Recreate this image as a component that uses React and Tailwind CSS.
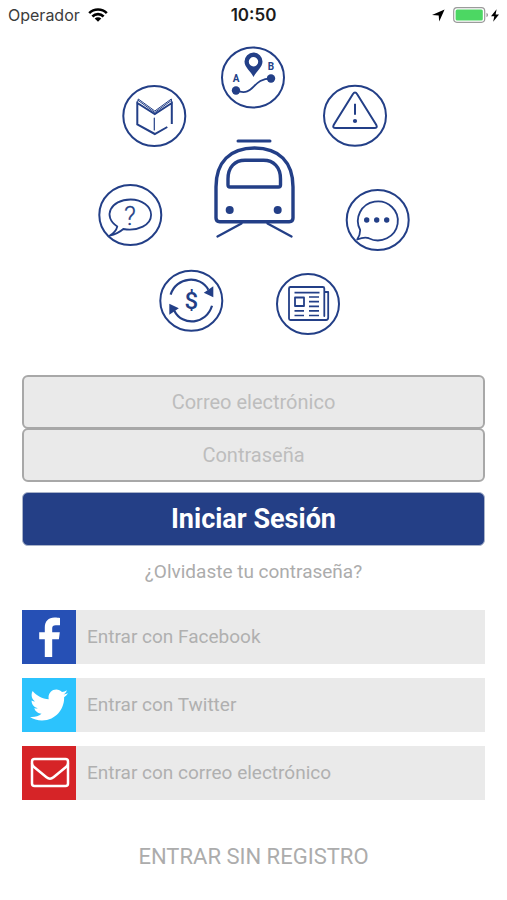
import { FaTwitter } from "react-icons/fa";

function StatusBar() {
  return (
    <header className="grid h-[30px] grid-cols-3 items-center px-2 font-['Inter','Liberation_Sans',sans-serif] text-base text-[#1c1c1c]">
      <div className="flex items-center gap-2">
        <span className="text-[#3c3c3c]">Operador</span>
        <svg viewBox="0 0 20 14" className="h-[14px] w-5" aria-hidden="true">
          <g fill="none" stroke="#000" strokeWidth="2.6">
            <path d="M1.2 5.2a12.4 12.4 0 0 1 17.6 0" />
            <path d="M4.4 8.5a7.9 7.9 0 0 1 11.2 0" />
          </g>
          <path d="M10 13.8 6.7 10.5a4.7 4.7 0 0 1 6.6 0z" />
        </svg>
      </div>
      <time className="text-center text-[17px] leading-6 font-semibold">10:50</time>
      <div className="flex items-center justify-end gap-2">
        <svg viewBox="0 0 13 13" className="size-[13px]" aria-hidden="true">
          <path d="M12.6.4 7.2 12.6 6.7 6.5 0 6z" />
        </svg>
        <div className="flex items-center gap-0.5">
          <svg viewBox="0 0 36 16" className="h-4 w-9" aria-hidden="true">
            <rect x="0.7" y="0.7" width="31" height="14.6" rx="3.2" fill="#fff" stroke="#9b9b9b" strokeWidth="1.2" />
            <rect x="2.6" y="2.6" width="27.2" height="10.8" rx="1.5" fill="#4cd763" />
            <path d="M33.5 5.8c2 .8 2 3.6 0 4.4z" fill="#8d8d8d" />
          </svg>
          <svg viewBox="0 0 8 13" className="h-[13px] w-2" aria-hidden="true">
            <path d="M5.6.2 0 7.3h3.3L2.2 12.8 8 5.5H4.6z" />
          </svg>
        </div>
      </div>
    </header>
  );
}

function Badge({ x, y, children }) {
  return (
    <g transform={`translate(${x} ${y})`}>
      <ellipse rx="31" ry="30" strokeWidth="2" />
      {children}
    </g>
  );
}

function Illustration() {
  return (
    <svg
      viewBox="0 0 321 300"
      className="mx-auto mt-[10px] w-[321px] max-w-full font-['Roboto',sans-serif]"
      fill="none"
      stroke="#233f87"
      strokeWidth="2"
      strokeLinecap="round"
      strokeLinejoin="round"
      role="img"
      aria-label="Servicios del tren"
    >
      {/* Train */}
      <path d="M145 101h32" strokeWidth="3" />
      <path
        d="M123 147c0-25 14-39 38.500-39s38.500 14 38.500 39v31q0 3.700-3.700 3.700h-69.600q-3.700 0-3.700-3.700z"
        strokeWidth="3.400"
      />
      <path d="M135 139c0-12 7-18.700 17-18.700h18.500c10 0 17 6.700 17 18.700v6q0 2-2 2h-48.500q-2 0-2-2z" strokeWidth="3.400" />
      <g fill="#233f87" stroke="none">
        <circle cx="136.700" cy="170" r="4" />
        <circle cx="184.700" cy="170" r="4" />
      </g>
      <path d="m124.500 196.500 24-13M198.500 196.500l-24-13" strokeWidth="2.300" />

      {/* Route */}
      <Badge x={160} y={37.5}>
        <path d="M-17 13C2 20-2 1 18 1" strokeWidth="1.800" />
        <g fill="#233f87" stroke="none">
          <circle cx="-17" cy="13" r="4.200" />
          <circle cx="18" cy="1" r="4.200" />
          <path
            fillRule="evenodd"
            d="M.5-.5C-2-6-8.500-10-8.500-16a9 9 0 0 1 18 0C9.500-10 3-6 .5-.5zM.5-20.500a4.700 4.700 0 1 0 0 9.400 4.700 4.700 0 0 0 0-9.400z"
          />
          <text x="-17" y="4.500" fontSize="10" fontWeight="700" textAnchor="middle">A</text>
          <text x="18" y="-8" fontSize="10" fontWeight="700" textAnchor="middle">B</text>
        </g>
      </Badge>

      {/* Book */}
      <Badge x={61.3} y={76}>
        <path d="M13 11 .5 18-17 8.500V-13L.5-2l17-11V8" strokeLinecap="butt" strokeLinejoin="miter" />
        <path d="M0 2v12" strokeWidth="1.200" />
        <path d="M-17-13l1-4L.5-5 17-17l.5 4M-16-15.500.5-3.500 17-15.500" strokeWidth="1" />
      </Badge>

      {/* Alert */}
      <Badge x={262} y={75.700}>
        <path d="M-2.200-21.500q2.200-3.400 4.400 0l19 30.500q1.800 3.300-2 3.300h-38.400q-3.800 0-2-3.300z" />
        <path d="M0-12V-1" strokeLinecap="butt" />
        <circle cy="5.300" r="2.100" fill="#233f87" stroke="none" />
      </Badge>

      {/* Help */}
      <Badge x={37.300} y={175}>
        <path d="M-13 11.500C-28 2-20-15.500.3-15.500c11.500 0 20.500 7 20.500 15.300C20.800 10 8 16.500-7 14c-4 3.500-8 5.500-13.500 6.500 4-2.300 6.500-5 7.500-9z" strokeWidth="1.800" />
        <text x="-0.500" y="9.500" fontSize="26" fontWeight="300" textAnchor="middle" fill="#233f87" stroke="#233f87" strokeWidth="0.300">?</text>
      </Badge>

      {/* Chat */}
      <Badge x={284.700} y={180}>
        <path d="M-17.500 10A20 19.500 0 1 1-9 18.200c-3.500-1.500-7-.5-11.500 1.300C-18.500 16.500-17.500 13-17.500 10z" strokeWidth="1.800" />
        <g fill="#233f87" stroke="none">
          <circle cx="-11" r="2.700" />
          <circle cx="-1" r="2.700" />
          <circle cx="9" r="2.700" />
        </g>
      </Badge>

      {/* Fares */}
      <Badge x={98.300} y={260.700}>
        <path d="M-20.700-6C-15-24 9-26 17-11" strokeLinecap="butt" strokeWidth="2.200" />
        <path d="M20.700 5C15 24-9 26-17 10" strokeLinecap="butt" strokeWidth="2.200" />
        <g fill="#233f87" stroke="none">
          <path d="M22-14.500V-3.500L12.500-8z" />
          <path d="M-22 14V3l9.500 4.500z" />
          <text x="0" y="8.500" fontSize="24" fontWeight="500" textAnchor="middle">$</text>
        </g>
      </Badge>

      {/* News */}
      <Badge x={215} y={264}>
        <path d="M16.300 12V-15.500q0-1.500-1.500-1.500h-32.300q-1.500 0-1.500 1.500v30q0 1.500 1.500 1.500h35.500q2.200 0 2.200-2.500V-12H16.300" strokeWidth="1.800" />
        <path d="M-13.500-11.300h25M1-7h10M1-2.300h10M1 2.300h10M1 6.900h10M1 11.500h10M-13.500 6.900h9.500M-13.500 11.500h9.500" strokeWidth="1.700" strokeLinecap="butt" />
        <path d="M-13-6.500h9v8.500h-9z" strokeWidth="1.800" />
      </Badge>
    </svg>
  );
}

function FacebookMark() {
  return (
    <svg viewBox="0 0 54 54" className="size-full" fill="#fff" aria-hidden="true">
      <path d="M38 8v7.300h-4.200c-2.600 0-3.600 1-3.600 3.300v3.600h7.600l-.9 7h-6.700V47h-7.400V29.200H17.200v-7h5.600v-4.900c0-6 3.600-9.800 9.700-9.800 2.300 0 4.300.2 5.500.5z" />
    </svg>
  );
}

function MailMark() {
  return (
    <svg viewBox="0 0 54 54" className="size-full" fill="none" stroke="#fff" strokeWidth="2.500" strokeLinejoin="round" aria-hidden="true">
      <rect x="10" y="13" width="36" height="27" rx="2.500" />
      <path d="M10 17.500c0 1.500.8 2.500 2 3.500l12.500 10.300c2.400 2 4.600 2 7 0L44 21c1.200-1 2-2 2-3.500" />
    </svg>
  );
}

const providers = [
  { label: "Entrar con Facebook", tile: "bg-[#2650b5]", icon: <FacebookMark /> },
  { label: "Entrar con Twitter", tile: "bg-[#2cc3fd]", icon: <FaTwitter className="size-[38px] text-white" aria-hidden="true" /> },
  { label: "Entrar con correo electrónico", tile: "bg-[#d62427]", icon: <MailMark /> },
];

const field =
  "h-[54px] w-full rounded-md border-2 border-[#a8a8a8] bg-[#eaeaea] text-center text-xl text-[#555] outline-none placeholder:text-[#bdbdbd]";

export default function App() {
  return (
    <div className="min-h-screen bg-white font-['Roboto',sans-serif]">
      <StatusBar />
      <main className="px-[22px] pb-7">
        <Illustration />
        <form className="mt-[35px] flex flex-col" onSubmit={(e) => e.preventDefault()}>
          <input type="email" aria-label="Correo electrónico" placeholder="Correo electrónico" className={field} />
          <input type="password" aria-label="Contraseña" placeholder="Contraseña" className={`${field} -mt-px`} />
          <button type="submit" className="mt-[10px] h-[54px] rounded-md border border-[#a9b3c9] bg-[#243f86] text-[27px] font-bold text-white">
            Iniciar Sesión
          </button>
        </form>
        <a href="#recuperar" className="mx-auto mt-3 block w-fit text-[19px] leading-7 text-[#acacac]">
          ¿Olvidaste tu contraseña?
        </a>
        <div className="mt-6 flex flex-col gap-[14px]">
          {providers.map((p) => (
            <button key={p.label} type="button" className="flex h-[54px] items-center gap-[11px] bg-[#eaeaea] text-left text-[19px] leading-7 text-[#b0b0b0]">
              <span className={`flex size-[54px] shrink-0 items-center justify-center ${p.tile}`}>{p.icon}</span>
              {p.label}
            </button>
          ))}
        </div>
        <button type="button" className="mx-auto mt-[43px] block text-[22px] leading-7 text-[#acacac]">
          ENTRAR SIN REGISTRO
        </button>
      </main>
    </div>
  );
}
